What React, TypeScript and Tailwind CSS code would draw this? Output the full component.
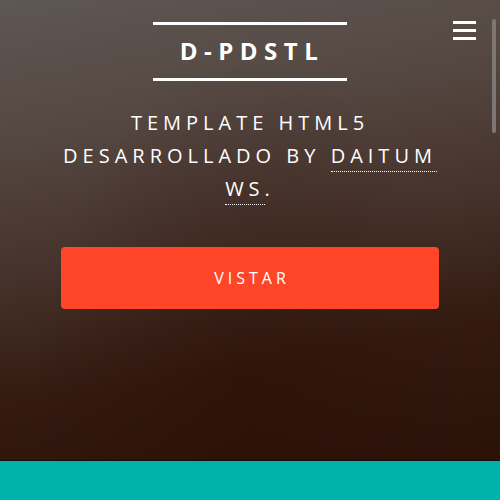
import React from "react";

export default function App() {
  return (
    <div className="relative w-[500px] h-[500px] overflow-hidden flex flex-col font-['Open_Sans',sans-serif]">
      <div className="relative h-[460px] bg-[linear-gradient(170deg,#5e5753_0%,#554842_25%,#46332b_50%,#33190f_75%,#2b1209_100%)] flex flex-col items-center">
        <div className="absolute inset-0 bg-[radial-gradient(ellipse_at_50%_85%,rgba(40,10,0,0.35)_0%,rgba(0,0,0,0)_60%)]" />
        <div className="relative mt-[22px] w-[194px] border-t-[3px] border-b-[3px] border-white pt-[8px] pb-[9px] text-center">
          <span className="text-white font-bold text-[24px] leading-[36px] tracking-[6.5px] pl-[4px]">D-PDSTL</span>
        </div>
        <p className="relative mt-[25px] w-[400px] text-center text-white text-[20px] leading-[33px] tracking-[5px]">
          TEMPLATE HTML5 DESARROLLADO BY{" "}
          <span className="border-b border-dotted border-white pb-[2px]">DAITUM WS</span>.
        </p>
        <button className="relative mt-[42px] w-[378px] h-[62px] rounded-[4px] bg-[#ff4629] text-white text-[16px] font-medium tracking-[4px] pl-[4px]">
          VISTAR
        </button>
        <div className="absolute left-[453px] top-[21px] flex flex-col gap-[5px]">
          <div className="w-[23px] h-[3px] bg-white" />
          <div className="w-[23px] h-[3px] bg-white" />
          <div className="w-[23px] h-[3px] bg-white" />
        </div>
        <div className="absolute left-[492px] top-[19px] w-[4px] h-[114px] rounded-full bg-[#7d7673]" />
      </div>
      <div className="h-[1px] bg-[#1a0c06]" />
      <div className="flex-1 bg-[#00b3aa]" />
    </div>
  );
}
